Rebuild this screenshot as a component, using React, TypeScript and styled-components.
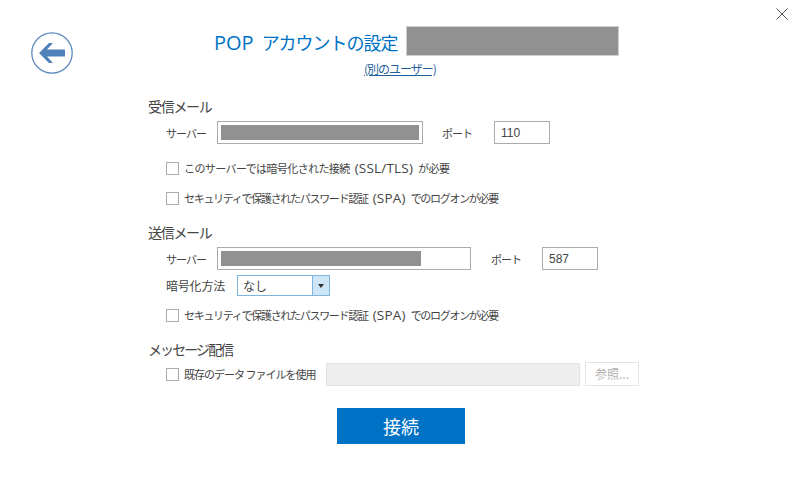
import React from "react";
import styled, { createGlobalStyle } from "styled-components";

const Global = createGlobalStyle`
  html, body { margin: 0; padding: 0; background: #fff; }
  * { box-sizing: border-box; }
`;

const FONT = `"Noto Sans CJK JP", "Noto Sans", sans-serif`;
const LATIN = `"Open Sans", "Noto Sans", sans-serif`;

const Page = styled.div`
  position: relative;
  width: 804px;
  height: 477px;
  overflow: hidden;
  background: #fff;
  font-family: ${FONT};
  color: #444;
  padding-top: 26px;
`;

const Close = styled.svg`
  position: absolute;
  left: 776px;
  top: 8px;
  width: 12px;
  height: 12px;
`;

const Back = styled.svg`
  position: absolute;
  left: 31px;
  top: 32px;
  width: 42px;
  height: 42px;
`;

const TitleRow = styled.div`
  display: flex;
  align-items: center;
  height: 30px;
  padding-left: 214px;
`;

const Title = styled.div`
  width: 192px;
  font-size: 18px;
  line-height: 32px;
  height: 30px;
  color: #0072c6;
  white-space: nowrap;
  letter-spacing: -1px;
`;

const TitleLatin = styled.span`
  font-family: ${LATIN};
  font-size: 20px;
  letter-spacing: 0;
  margin-right: 8px;
`;

const TitleMask = styled.div`
  width: 213px;
  height: 30px;
  background: #919191;
  border: 1px solid #cfcfcf;
`;

const LinkRow = styled.div`
  display: flex;
  padding-left: 364px;
  margin-top: 5px;
  height: 16px;
`;

const UserLink = styled.a`
  font-size: 12px;
  line-height: 16px;
  color: #1f5f9e;
  text-decoration: underline;
  white-space: nowrap;
  letter-spacing: -1px;
`;

const Form = styled.div`
  display: flex;
  flex-direction: column;
  padding-left: 148px;
`;

const Heading = styled.div<{ $top: number; $tracking?: number }>`
  font-size: 14px;
  line-height: 20px;
  height: 20px;
  margin-top: ${(p) => p.$top}px;
  color: #444;
  white-space: nowrap;
  letter-spacing: ${(p) => p.$tracking ?? -1.3}px;
`;

const Row = styled.div<{ $top: number; $height?: number }>`
  display: flex;
  align-items: center;
  height: ${(p) => p.$height ?? 23}px;
  margin-top: ${(p) => p.$top}px;
  padding-left: 18px;
`;

const Label = styled.div<{ $width: number; $kanji?: boolean }>`
  width: ${(p) => p.$width}px;
  flex: none;
  font-size: ${(p) => (p.$kanji ? 12 : 11)}px;
  line-height: 16px;
  color: #444;
  white-space: nowrap;
  letter-spacing: ${(p) => (p.$kanji ? -0.2 : -1)}px;
`;

const TextBox = styled.div<{ $width: number; $gap: number; $disabled?: boolean }>`
  width: ${(p) => p.$width}px;
  height: 23px;
  flex: none;
  margin-right: ${(p) => p.$gap}px;
  border: 1px solid ${(p) => (p.$disabled ? "#e3e3e3" : "#ababab")};
  background: ${(p) => (p.$disabled ? "#eeeeee" : "#fff")};
  padding: 2px 3px;
  display: flex;
  align-items: center;
`;

const Mask = styled.div<{ $width: number }>`
  width: ${(p) => p.$width}px;
  height: 15px;
  background: #919191;
`;

const PortValue = styled.span`
  font-family: "Liberation Sans", sans-serif;
  font-size: 12px;
  color: #444;
  padding-left: 3px;
`;

const Check = styled.span`
  flex: none;
  width: 13px;
  height: 13px;
  border: 1px solid #ababab;
  background: #fff;
  margin-right: 5px;
`;

const CheckText = styled.span<{ $width?: number; $tracking: number }>`
  font-size: 11px;
  line-height: 16px;
  color: #444;
  white-space: nowrap;
  letter-spacing: ${(p) => p.$tracking}px;
  ${(p) => (p.$width ? `width: ${p.$width}px; flex: none;` : "")}
`;

const CheckLatin = styled.span`
  font-family: ${LATIN};
  font-size: 13.5px;
  letter-spacing: 0.2px;
  margin: 0 5px;
`;

const Select = styled.div`
  width: 93px;
  height: 21px;
  display: flex;
  border: 1px solid #7fb4dc;
  background: #fff;
`;

const SelectValue = styled.div`
  flex: 1;
  font-size: 12px;
  line-height: 19px;
  padding-left: 5px;
  color: #444;
`;

const SelectArrow = styled.div`
  width: 17px;
  border-left: 1px solid #7fb4dc;
  background: #cde6f7;
  display: flex;
  align-items: center;
  justify-content: center;

  &::after {
    content: "";
    border-left: 3.5px solid transparent;
    border-right: 3.5px solid transparent;
    border-top: 4px solid #333;
  }
`;

const BrowseButton = styled.div`
  width: 54px;
  height: 24px;
  flex: none;
  margin-left: 5px;
  border: 1px solid #e3e3e3;
  background: #fff;
  color: #b1b1b1;
  font-size: 12px;
  line-height: 22px;
  text-align: center;
  white-space: nowrap;
`;

const ConnectRow = styled.div`
  display: flex;
  padding-left: 337px;
  margin-top: 22px;
`;

const Connect = styled.div`
  width: 128px;
  height: 36px;
  background: #0072c6;
  color: #fff;
  font-size: 18px;
  line-height: 36px;
  text-align: center;
`;

export default function App() {
  return (
    <Page>
      <Global />
      <Close viewBox="0 0 12 12">
        <path d="M0.5 0.5 L11.5 11.5 M11.5 0.5 L0.5 11.5" stroke="#555" strokeWidth="1" fill="none" />
      </Close>
      <Back viewBox="0 0 42 42">
        <circle cx="21" cy="21" r="20.2" fill="#fff" stroke="#5a8abd" strokeWidth="1.3" />
        <path d="M8 21 L18 11 L22 11 L16 17.5 L34 17.5 L34 24.5 L16 24.5 L22 31 L18 31 Z" fill="#4f82bb" />
      </Back>
      <TitleRow>
        <Title><TitleLatin>POP</TitleLatin>アカウントの設定</Title>
        <TitleMask />
      </TitleRow>
      <LinkRow>
        <UserLink>(別のユーザー)</UserLink>
      </LinkRow>
      <Form>
        <Heading $top={19}>受信メール</Heading>
        <Row $top={5}>
          <Label $width={51}>サーバー</Label>
          <TextBox $width={206} $gap={19}><Mask $width={200} /></TextBox>
          <Label $width={52}>ポート</Label>
          <TextBox $width={56} $gap={0}><PortValue>110</PortValue></TextBox>
        </Row>
        <Row $top={16} $height={16}>
          <Check />
          <CheckText $tracking={-0.6}>このサーバーでは暗号化された接続<CheckLatin>(SSL/TLS)</CheckLatin>が必要</CheckText>
        </Row>
        <Row $top={14} $height={16}>
          <Check />
          <CheckText $tracking={-1.3}>セキュリティで保護されたパスワード認証<CheckLatin>(SPA)</CheckLatin>でのログオンが必要</CheckText>
        </Row>
        <Heading $top={16}>送信メール</Heading>
        <Row $top={5}>
          <Label $width={51}>サーバー</Label>
          <TextBox $width={254} $gap={20}><Mask $width={200} /></TextBox>
          <Label $width={51}>ポート</Label>
          <TextBox $width={56} $gap={0}><PortValue>587</PortValue></TextBox>
        </Row>
        <Row $top={5} $height={21}>
          <Label $width={71} $kanji>暗号化方法</Label>
          <Select>
            <SelectValue>なし</SelectValue>
            <SelectArrow />
          </Select>
        </Row>
        <Row $top={11} $height={16}>
          <Check />
          <CheckText $tracking={-1.3}>セキュリティで保護されたパスワード認証<CheckLatin>(SPA)</CheckLatin>でのログオンが必要</CheckText>
        </Row>
        <Heading $top={16} $tracking={-1.9}>メッセージ配信</Heading>
        <Row $top={3} $height={24}>
          <Check />
          <CheckText $width={142} $tracking={-1}>既存のデータ ファイルを使用</CheckText>
          <TextBox $width={254} $gap={0} $disabled />
          <BrowseButton>参照...</BrowseButton>
        </Row>
      </Form>
      <ConnectRow>
        <Connect>接続</Connect>
      </ConnectRow>
    </Page>
  );
}
